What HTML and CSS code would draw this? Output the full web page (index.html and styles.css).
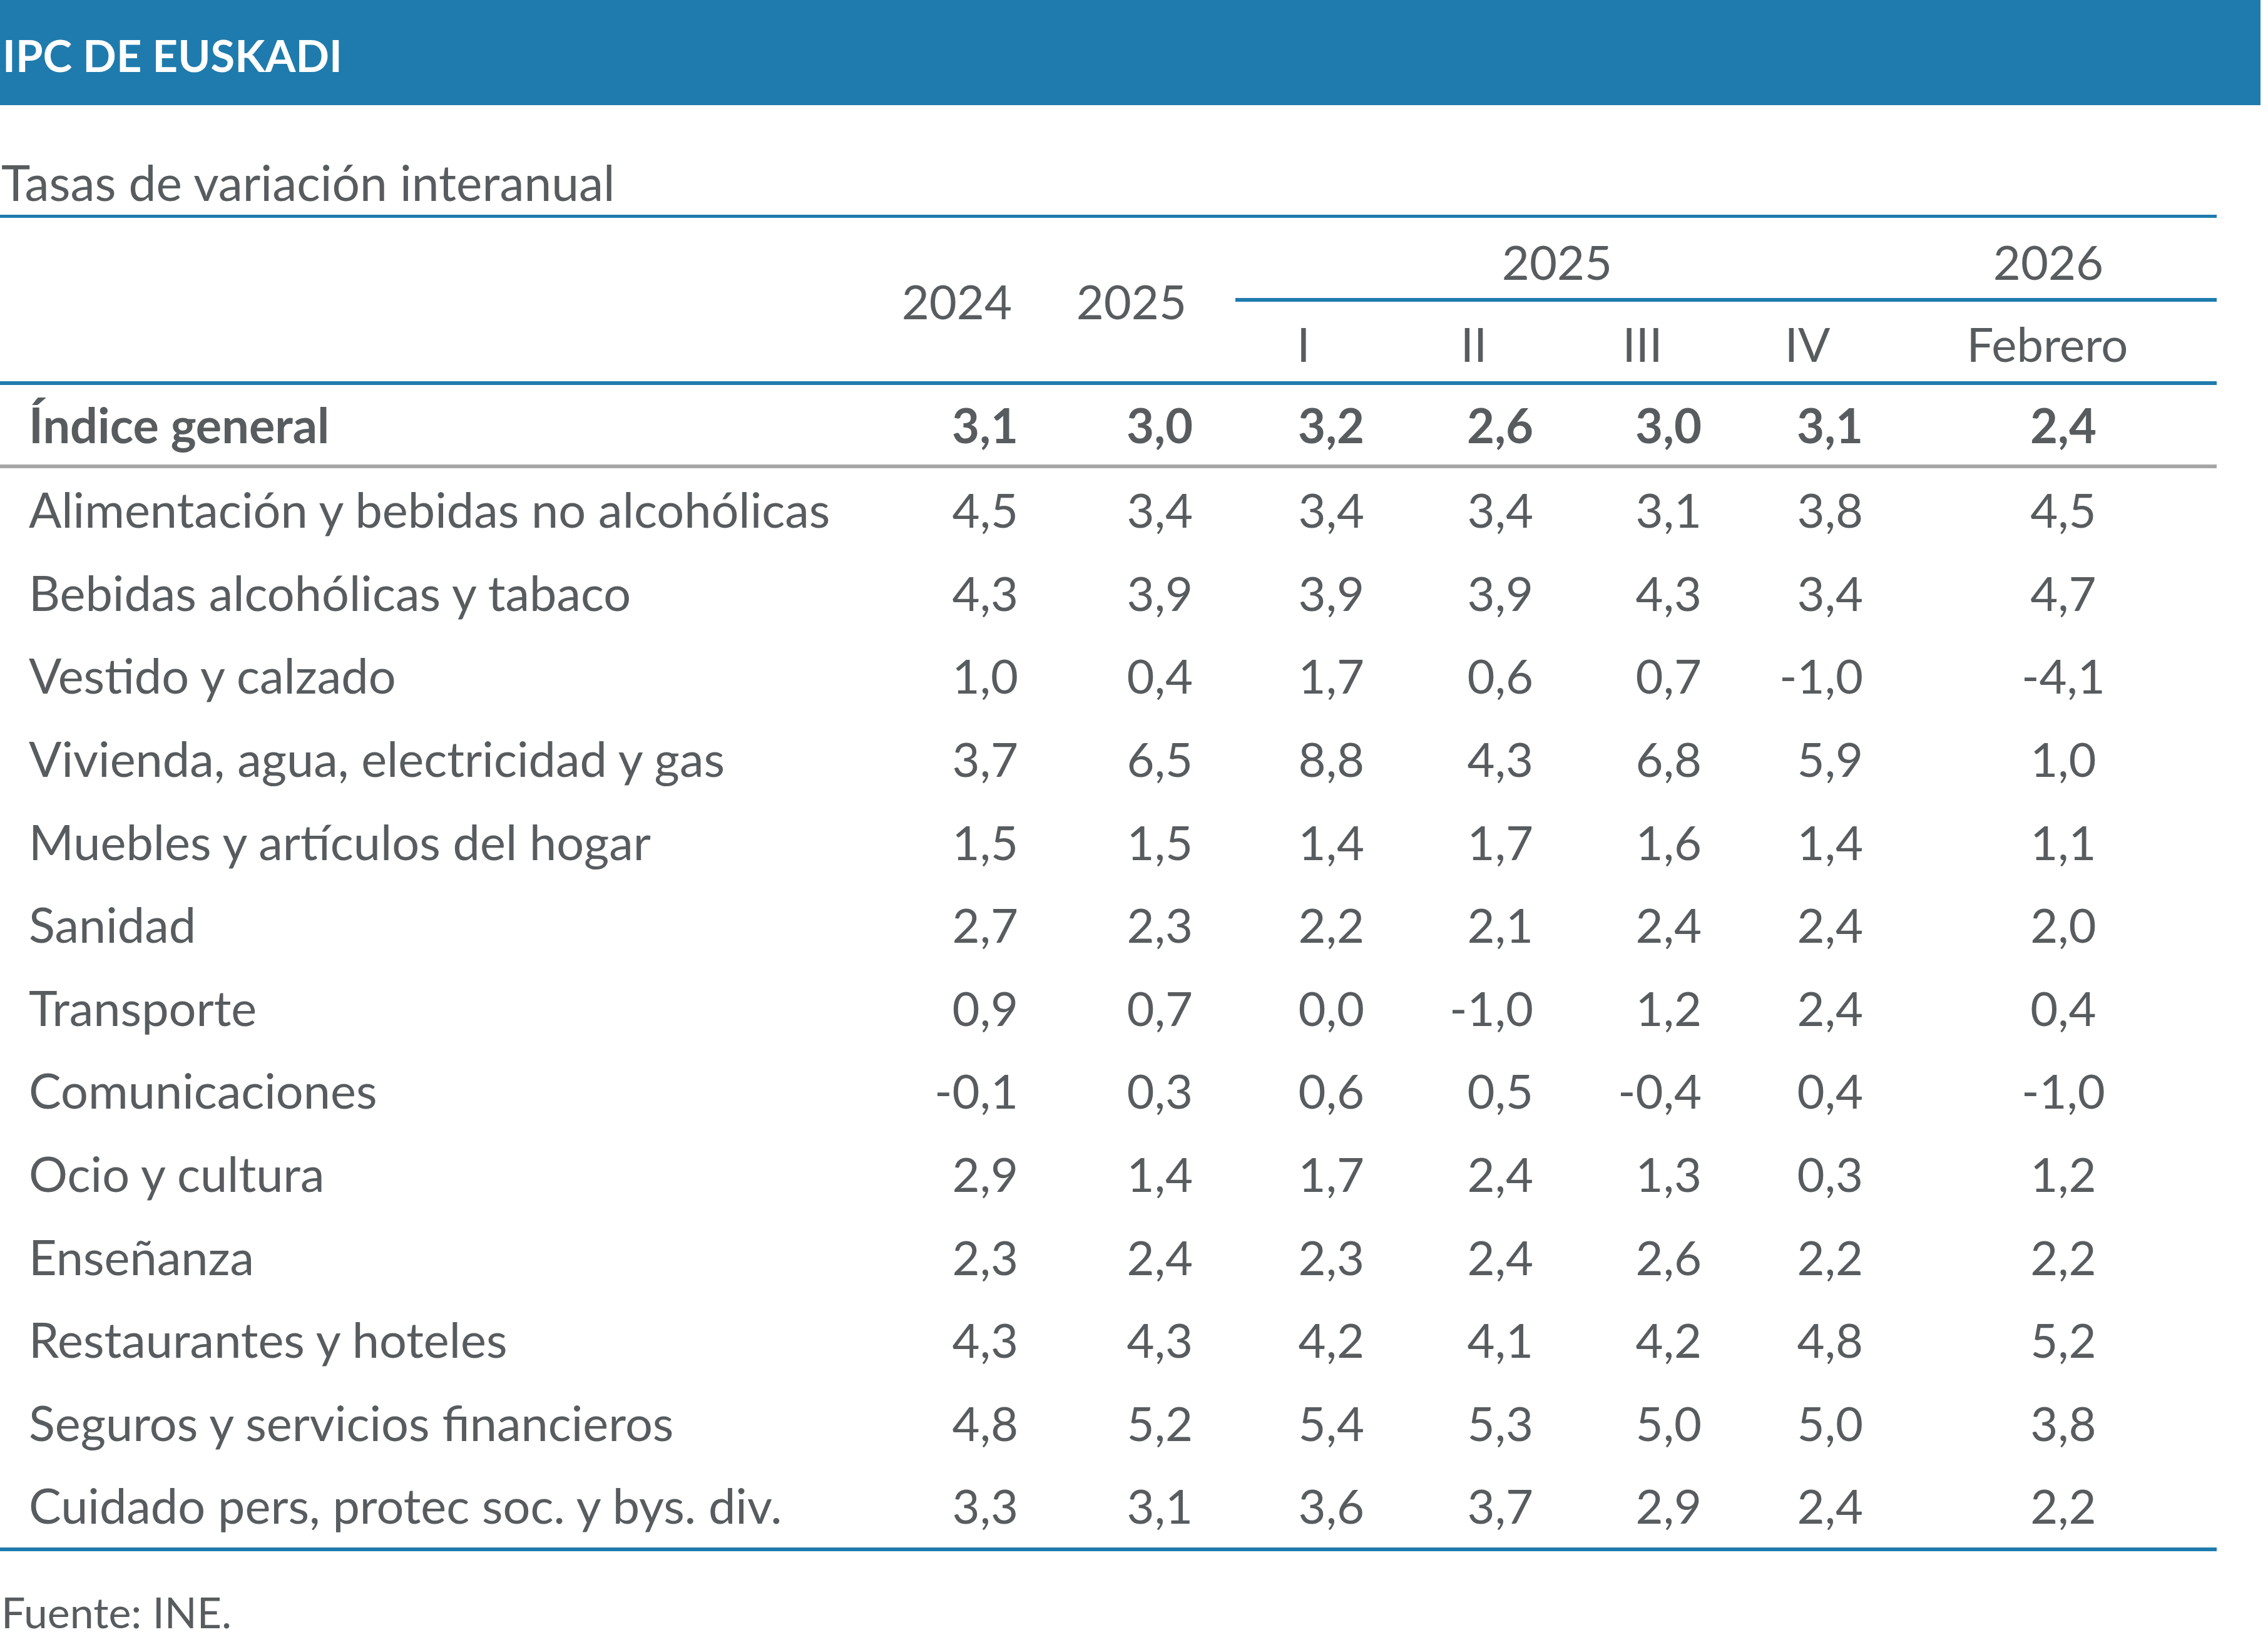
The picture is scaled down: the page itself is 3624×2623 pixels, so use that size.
FILE: index.html
```html
<!DOCTYPE html>
<html lang="es">
<head>
<meta charset="utf-8">
<title>IPC de Euskadi</title>
<link rel="stylesheet" href="styles.css">
</head>
<body>
<div class="page">
  <div class="banner"><h1 class="title">IPC DE EUSKADI</h1></div>
  <div class="subtitle">Tasas de variación interanual</div>
  <div class="table">
    <div class="thead">
      <div class="h-year c2">2024</div>
      <div class="h-year c3">2025</div>
      <div class="h-group">
        <span class="g25">2025</span>
        <span class="g26">2026</span>
      </div>
      <div class="h-sub c4">I</div>
      <div class="h-sub c5">II</div>
      <div class="h-sub c6">III</div>
      <div class="h-sub c7">IV</div>
      <div class="h-sub c8">Febrero</div>
    </div>
    <div class="row total">
      <div class="lab">Índice general</div><div class="num">3,1</div><div class="num">3,0</div><div class="num">3,2</div><div class="num">2,6</div><div class="num">3,0</div><div class="num">3,1</div><div class="num feb">2,4</div>
    </div>
    <div class="body">
      <div class="row"><div class="lab">Alimentación y bebidas no alcohólicas</div><div class="num">4,5</div><div class="num">3,4</div><div class="num">3,4</div><div class="num">3,4</div><div class="num">3,1</div><div class="num">3,8</div><div class="num feb">4,5</div></div>
      <div class="row"><div class="lab">Bebidas alcohólicas y tabaco</div><div class="num">4,3</div><div class="num">3,9</div><div class="num">3,9</div><div class="num">3,9</div><div class="num">4,3</div><div class="num">3,4</div><div class="num feb">4,7</div></div>
      <div class="row"><div class="lab">Vestido y calzado</div><div class="num">1,0</div><div class="num">0,4</div><div class="num">1,7</div><div class="num">0,6</div><div class="num">0,7</div><div class="num">-1,0</div><div class="num feb">-4,1</div></div>
      <div class="row"><div class="lab">Vivienda, agua, electricidad y gas</div><div class="num">3,7</div><div class="num">6,5</div><div class="num">8,8</div><div class="num">4,3</div><div class="num">6,8</div><div class="num">5,9</div><div class="num feb">1,0</div></div>
      <div class="row"><div class="lab">Muebles y artículos del hogar</div><div class="num">1,5</div><div class="num">1,5</div><div class="num">1,4</div><div class="num">1,7</div><div class="num">1,6</div><div class="num">1,4</div><div class="num feb">1,1</div></div>
      <div class="row"><div class="lab">Sanidad</div><div class="num">2,7</div><div class="num">2,3</div><div class="num">2,2</div><div class="num">2,1</div><div class="num">2,4</div><div class="num">2,4</div><div class="num feb">2,0</div></div>
      <div class="row"><div class="lab">Transporte</div><div class="num">0,9</div><div class="num">0,7</div><div class="num">0,0</div><div class="num">-1,0</div><div class="num">1,2</div><div class="num">2,4</div><div class="num feb">0,4</div></div>
      <div class="row"><div class="lab">Comunicaciones</div><div class="num">-0,1</div><div class="num">0,3</div><div class="num">0,6</div><div class="num">0,5</div><div class="num">-0,4</div><div class="num">0,4</div><div class="num feb">-1,0</div></div>
      <div class="row"><div class="lab">Ocio y cultura</div><div class="num">2,9</div><div class="num">1,4</div><div class="num">1,7</div><div class="num">2,4</div><div class="num">1,3</div><div class="num">0,3</div><div class="num feb">1,2</div></div>
      <div class="row"><div class="lab">Enseñanza</div><div class="num">2,3</div><div class="num">2,4</div><div class="num">2,3</div><div class="num">2,4</div><div class="num">2,6</div><div class="num">2,2</div><div class="num feb">2,2</div></div>
      <div class="row"><div class="lab">Restaurantes y hoteles</div><div class="num">4,3</div><div class="num">4,3</div><div class="num">4,2</div><div class="num">4,1</div><div class="num">4,2</div><div class="num">4,8</div><div class="num feb">5,2</div></div>
      <div class="row"><div class="lab">Seguros y servicios financieros</div><div class="num">4,8</div><div class="num">5,2</div><div class="num">5,4</div><div class="num">5,3</div><div class="num">5,0</div><div class="num">5,0</div><div class="num feb">3,8</div></div>
      <div class="row"><div class="lab">Cuidado pers, protec soc. y bys. div.</div><div class="num">3,3</div><div class="num">3,1</div><div class="num">3,6</div><div class="num">3,7</div><div class="num">2,9</div><div class="num">2,4</div><div class="num feb">2,2</div></div>
    </div>
  </div>
  <div class="source">Fuente: INE.</div>
</div>
</body>
</html>
```

FILE: styles.css
```css
html, body {
  margin: 0;
  padding: 0;
  background: #ffffff;
}

.page {
  width: 3624px;
  font-family: "Lato", "Open Sans", sans-serif;
  color: #585c5f;
}

.banner {
  width: 3612px;
  height: 168px;
  background: #1f7bad;
  display: flex;
  align-items: center;
  box-sizing: border-box;
  padding: 8px 0 0 4px;
}

.title {
  margin: 0;
  font-size: 70.5px;
  font-weight: 700;
  line-height: 72px;
  color: #ffffff;
}

.subtitle {
  height: 175px;
  box-sizing: border-box;
  padding: 85px 0 0 2px;
  font-size: 78.5px;
  line-height: 76px;
}

.table {
  width: 3542px;
  border-top: 5px solid #1f7bad;
  border-bottom: 6px solid #1f7bad;
  font-size: 76px;
  line-height: 76px;
}

.thead,
.row {
  display: grid;
  grid-template-columns: 1360px 307px 279px 274px 270px 269px 258px 525px;
}

.thead {
  grid-template-rows: 134px 127px;
  border-bottom: 6px solid #1f7bad;
}

.h-year {
  grid-row: 1 / 3;
  align-self: center;
  text-align: right;
  padding-right: 50px;
  padding-top: 4px;
}

.c2 { grid-column: 2; }
.c3 { grid-column: 3; }
.c4 { grid-column: 4; }
.c5 { grid-column: 5; }
.c6 { grid-column: 6; }
.c7 { grid-column: 7; }
.c8 { grid-column: 8; }

.h-group {
  grid-column: 4 / 9;
  grid-row: 1;
  margin-left: 28px;
  border-bottom: 6px solid #1f7bad;
  display: grid;
  grid-template-columns: 1043px 525px;
  align-items: center;
}

.g25,
.g26 {
  text-align: center;
  padding-top: 12px;
}

.g25 { padding-right: 15px; }
.g26 { padding-right: 13px; }

.h-sub {
  grid-row: 2;
  align-self: center;
  text-align: center;
  padding-top: 6px;
}

.c8.h-sub { padding-right: 16px; }

.row {
  height: 132.6px;
  align-items: center;
}

.row.total {
  height: 127px;
  font-weight: 700;
  border-bottom: 6px solid #a6a6a6;
}

.lab {
  padding-left: 46px;
  white-space: nowrap;
  font-size: 77.5px;
}

.num {
  text-align: right;
  padding-right: 40px;
}

.num.feb {
  text-align: center;
  padding-right: 0;
  padding-left: 35px;
}

.source {
  margin-top: 63px;
  padding-left: 2px;
  font-size: 68px;
  line-height: 68px;
}
```
